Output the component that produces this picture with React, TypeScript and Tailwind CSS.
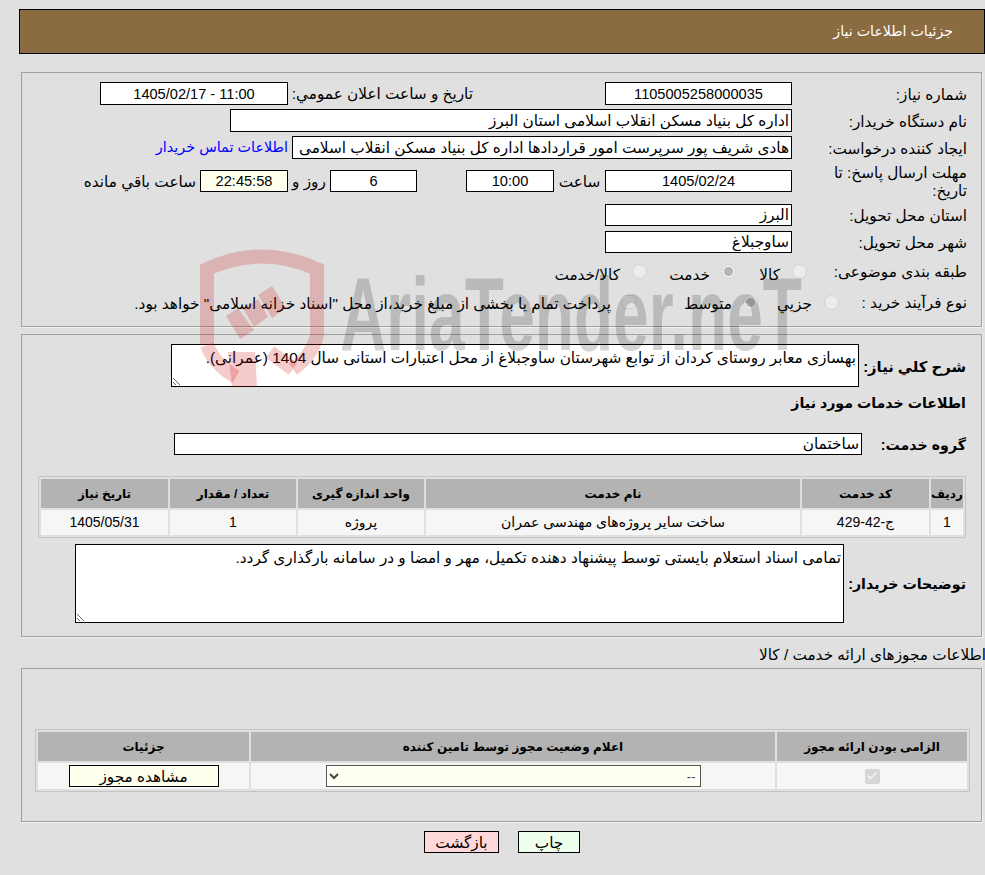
import { Check } from "lucide-react";
import type { ReactNode } from "react";

const inputCls = "h-full bg-white border border-black px-[2px] text-black outline-none shrink-0";

function Field({ value, w, center, bg }: { value: string; w: string; center?: boolean; bg?: string }) {
  return (
    <input
      readOnly
      value={value}
      className={`${inputCls} ${w} ${center ? "text-center text-[14.6px]" : "text-right"} ${bg ?? ""}`}
    />
  );
}

function Label({ children, cls }: { children: ReactNode; cls?: string }) {
  return <div className={`shrink-0 leading-[18px] pt-[2px] ${cls ?? "w-[175px]"}`}>{children}</div>;
}

function Radio({ on }: { on?: boolean }) {
  return (
    <span className="w-[15px] h-[15px] rounded-full bg-[#ececec] border border-[#d2d2d2] flex items-center justify-center shrink-0">
      {on && <span className="w-[9px] h-[9px] rounded-full bg-[#b4b4b4]" />}
    </span>
  );
}

function Section({ cls, children }: { cls: string; children: ReactNode }) {
  return (
    <section className={`mr-[3px] w-[961px] border border-[#a0a0a0] shadow-[1px_1px_0_#f2f2f2] ${cls}`}>
      {children}
    </section>
  );
}

const needCols = ["w-[32px]", "w-[127px]", "w-[374px]", "w-[126px]", "w-[126px]", "w-[127px]"];
const needHead = ["ردیف", "کد خدمت", "نام خدمت", "واحد اندازه گیری", "تعداد / مقدار", "تاریخ نیاز"];
const needRow = ["1", "ج-42-429", "ساخت سایر پروژه‌های مهندسی عمران", "پروژه", "1", "1405/05/31"];

const headCell = "h-[29px] bg-[#b3b3b3] flex items-center justify-center text-[12px] font-bold whitespace-nowrap";

function Watermark() {
  return (
    <svg className="absolute left-0 top-0 pointer-events-none" width="985" height="400" viewBox="0 0 985 400">
      <g fill="none" stroke="#cc0000" strokeOpacity="0.2" strokeWidth="14">
        <path d="M207 345 L207 269 Q262 244 317 269 L317 335 Q312 356 293 369" />
        <path d="M293 369 L270 352" />
        <path d="M207 345 Q214 364 236 377" />
      </g>
      <g fill="#cc0000" fillOpacity="0.2">
        <polygon points="226,316 238,308 254,330 240,339" />
        <polygon points="243,309 258,299 268,317 254,327" />
        <polygon points="258,295 272,286 286,308 272,318" />
        <polygon points="228,352 255,352 257,387 232,387" />
      </g>
      <text
        x="340"
        y="350"
        direction="ltr"
        textAnchor="start"
        textLength="462"
        lengthAdjust="spacingAndGlyphs"
        fontFamily="'Liberation Sans', sans-serif"
        fontWeight="700"
        fontSize="104"
        fill="#000000"
        fillOpacity="0.17"
      >
        AriaTender.neT
      </text>
    </svg>
  );
}

export default function App() {
  return (
    <div dir="rtl" className="relative w-[985px] h-[875px] overflow-hidden bg-[#e0e0e0] pt-[9px] text-black text-[15.3px] font-['Liberation_Sans','DejaVu_Sans',sans-serif]">
      {/* header */}
      <div className="pr-[31px] h-[45px] w-[966px] border border-black bg-[#8b6b42] text-white text-[14.2px] flex items-center">
        جزئیات اطلاعات نیاز
      </div>

      <div className="mt-[18px] w-[966px]">
        {/* first block */}
        <Section cls="h-[255px] pr-[14px] pt-[9px]">
          <div className="flex h-[23px] items-center">
            <Label>شماره نیاز:</Label>
            <Field value="1105005258000035" w="w-[187px]" center />
            <div className="w-[317px] pr-[132px] pt-[2px]">تاریخ و ساعت اعلان عمومي:</div>
            <Field value="11:00 - 1405/02/17" w="w-[188px]" center />
          </div>
          <div className="flex h-[23px] items-center mt-[4px]">
            <Label>نام دستگاه خریدار:</Label>
            <Field value="اداره کل بنیاد مسکن انقلاب اسلامی استان البرز" w="w-[562px]" />
          </div>
          <div className="flex h-[23px] items-center mt-[4px]">
            <Label>ایجاد کننده درخواست:</Label>
            <Field value="هادی شریف پور سرپرست امور قراردادها اداره کل بنیاد مسکن انقلاب اسلامی استان البرز" w="w-[500px]" />
            <a className="mr-[4px] text-[14.4px] text-[#0000ff] whitespace-nowrap">اطلاعات تماس خریدار</a>
          </div>
          <div className="flex h-[22px] items-center mt-[11px]">
            <Label>مهلت ارسال پاسخ: تا<br />تاریخ:</Label>
            <Field value="1405/02/24" w="w-[187px]" center />
            <div className="w-[51px] text-center pt-[2px]">ساعت</div>
            <Field value="10:00" w="w-[88px]" center />
            <div className="w-[49px]" />
            <Field value="6" w="w-[87px]" center />
            <div className="w-[42px] text-center pt-[2px]">روز و</div>
            <Field value="22:45:58" w="w-[88px]" center bg="!bg-[#ffffee]" />
            <div className="mr-[4px] pt-[2px] whitespace-nowrap">ساعت باقي مانده</div>
          </div>
          <div className="flex h-[22px] items-center mt-[12px]">
            <Label>استان محل تحویل:</Label>
            <Field value="البرز" w="w-[187px]" />
          </div>
          <div className="flex h-[22px] items-center mt-[5px]">
            <Label>شهر محل تحویل:</Label>
            <Field value="ساوجبلاغ" w="w-[187px]" />
          </div>
          <div className="flex h-[18px] items-center mt-[9px]">
            <Label cls="w-[160px]">طبقه بندی موضوعی:</Label>
            <Radio />
            <span className="mr-[12px] w-[44px] mt-[8px]">کالا</span>
            <Radio on />
            <span className="mr-[11px] w-[63px] mt-[8px]">خدمت</span>
            <Radio />
            <span className="mr-[12px] mt-[8px]">کالا/خدمت</span>
          </div>
          <div className="flex h-[20px] items-center mt-[12px]">
            <Label cls="w-[128px]">نوع فرآیند خرید :</Label>
            <Radio />
            <span className="mr-[12px] w-[54px] mt-[4px]">جزیي</span>
            <Radio on />
            <span className="mr-[11px] w-[96px] mt-[4px]">متوسط</span>
            <span className="w-[14px] h-[14px] rounded-[3px] border border-[#cfcfcf] bg-[#e6e6e6] shrink-0" />
            <span className="mr-[11px] mt-[4px] whitespace-nowrap">پرداخت تمام یا بخشی از مبلغ خرید،از محل "اسناد خزانه اسلامی" خواهد بود.</span>
          </div>
        </Section>

        {/* second block */}
        <Section cls="mt-[7px] h-[303px] pr-[15px] pt-[9px]">
          <div className="flex items-center h-[43px]">
            <div className="w-[107px] shrink-0 text-[14.8px] font-bold pt-[3px]">شرح کلي نیاز:</div>
            <textarea
              readOnly
              value="بهسازی معابر روستای کردان از توابع شهرستان ساوجبلاغ از محل اعتبارات استانی سال 1404 (عمرانی)."
              className="w-[688px] h-[43px] bg-white border border-black px-[2px] py-0 leading-[26px] outline-none"
            />
          </div>
          <div className="mt-[7px] text-[14.2px] font-bold leading-[18px]">اطلاعات خدمات مورد نیاز</div>
          <div className="flex items-center h-[22px] mt-[21px]">
            <div className="w-[104px] shrink-0 text-[14.2px] font-bold pt-[3px]">گروه خدمت:</div>
            <Field value="ساختمان" w="w-[688px]" />
          </div>
          <div className="mt-[21px] w-[928px] border border-[#c4c4c4] p-[2px]">
            <div className="flex gap-[2px]">
              {needHead.map((t, i) => (
                <div key={t} className={`${needCols[i]} ${headCell}`}>{t}</div>
              ))}
            </div>
            <div className="flex gap-[2px] mt-[2px]">
              {needRow.map((t, i) => (
                <div key={i} className={`${needCols[i]} h-[25px] bg-[#f6f6f6] flex items-center justify-center text-[14px] whitespace-nowrap`}>{t}</div>
              ))}
            </div>
          </div>
          <div className="flex items-center mt-[6px] h-[79px]">
            <div className="w-[122px] shrink-0 text-[14.2px] font-bold pt-[3px]">توضیحات خریدار:</div>
            <textarea
              readOnly
              value="تمامی اسناد استعلام بایستی توسط پیشنهاد دهنده تکمیل، مهر و امضا و در سامانه بارگذاری گردد."
              className="w-[769px] h-[79px] bg-white border border-black px-[2px] py-0 leading-[26px] outline-none"
            />
          </div>
        </Section>

        <div className="mt-[8px] h-[23px] -mr-[1px] leading-[20px]">اطلاعات مجوزهای ارائه خدمت / کالا</div>

        {/* third block */}
        <Section cls="h-[154px] pt-[60px] pr-[11px]">
          <div className="w-[935px] border border-[#c4c4c4] p-[2px]">
            <div className="flex gap-[2px]">
              <div className={`w-[190px] ${headCell}`}>الزامی بودن ارائه مجوز</div>
              <div className={`w-[524px] ${headCell}`}>اعلام وضعیت مجوز توسط تامین کننده</div>
              <div className={`w-[211px] ${headCell}`}>جزئیات</div>
            </div>
            <div className="flex gap-[2px] mt-[2px]">
              <div className="w-[190px] h-[26px] bg-[#f6f6f6] flex items-center justify-center">
                <span className="w-[15px] h-[15px] rounded-[2px] bg-[#d6d6d6] flex items-center justify-center">
                  <Check size={12} strokeWidth={3.5} className="text-[#f4f4f4]" />
                </span>
              </div>
              <div className="w-[524px] h-[26px] bg-[#f6f6f6] flex items-center justify-center">
                <select defaultValue="--" className="w-[375px] h-[22px] bg-[#fffff4] border border-[#555555] text-[13px] text-[#444444] outline-none">
                  <option value="--">--</option>
                </select>
              </div>
              <div className="w-[211px] h-[26px] bg-[#f6f6f6] flex items-center justify-center">
                <button type="button" className="w-[150px] h-[22px] bg-[#ffffee] border border-black">مشاهده مجوز</button>
              </div>
            </div>
          </div>
        </Section>

        <div className="flex mt-[9px] mr-[405px]">
          <button type="button" className="w-[62px] h-[22px] bg-[#eeffee] border border-black">چاپ</button>
          <button type="button" className="mr-[19px] w-[75px] h-[22px] bg-[#ffd9d9] border border-black">بازگشت</button>
        </div>
      </div>

      <Watermark />
    </div>
  );
}
